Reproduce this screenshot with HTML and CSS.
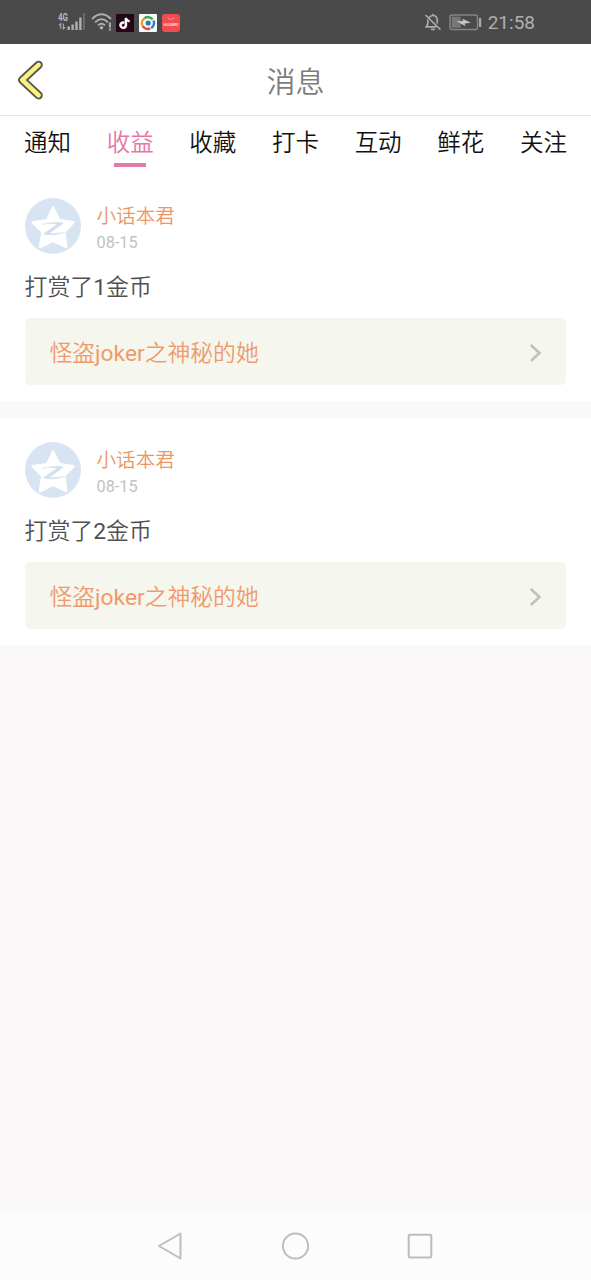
FILE: index.html
```html
<!DOCTYPE html>
<html lang="zh-CN">
<head>
<meta charset="utf-8">
<title>消息</title>
<link rel="stylesheet" href="styles.css">
</head>
<body>
<svg width="0" height="0" class="defs">
  <symbol id="star" viewBox="0 0 56 56">
    <circle cx="28" cy="28" r="28" fill="#d8e4f1"/>
    <path d="M28 8 L34.5 20.5 Q35 21.5 36 21.7 L49 23.6 Q50 24 49.2 25 L40.6 33.8 Q40 34.5 40.2 35.5 L42 49 Q42 50.4 40.6 49.8 L28 43.6 L15.5 49.8 Q14 50.4 14.2 49 L16.4 35.5 Q16.6 34.5 16 33.8 L7.2 25 Q6.4 24 7.4 23.6 L20.4 21.7 Q21.4 21.5 22 20.5 Z" fill="#fff" stroke="#fff" stroke-width="1" stroke-linejoin="round"/>
    <path d="M17.5 26.2Q27 23.6 37.8 24.6L37.8 25.8L24.4 35.2Q32 36 40 34.4Q30 38 19 36.6L19.2 35.2L32.4 26Q24 25 17.5 26.2Z" fill="#d2dfee" stroke="#d2dfee" stroke-width=".4"/>
  </symbol>
</svg>
<div class="screen">
  <div class="status">
    <div class="status-left">
      <svg class="signal" width="28" height="20" viewBox="0 0 28 20">
        <text x="0" y="8.7" class="net" textLength="10" lengthAdjust="spacingAndGlyphs">4G</text>
        <path d="M2.8 17V11.5L1 13.3M5.4 11.5V17L7.2 15.2" fill="none" stroke="#aaa" stroke-width="1.1"/>
        <path d="M9.5 14.5h2.4V18H9.5zM13.4 12.5h2.4V18h-2.4zM17.3 9.5h2.4V18h-2.4zM21.2 5.5h2.4V18h-2.4z" fill="#b0b0b0"/>
        <path d="M25 1h1.8v17H25z" fill="#6d6d6d"/>
      </svg>
      <svg class="wifi" width="22" height="20" viewBox="0 0 22 20">
        <g fill="none" stroke="#b0b0b0" stroke-width="1.9"><path d="M1 7Q10.5-2.5 20 7"/><path d="M4.1 10.3Q10.5 3.9 16.9 10.3"/><path d="M7 13.4Q10.5 10 14 13.4"/></g>
        <circle cx="10.5" cy="15.8" r="1.8" fill="#b0b0b0"/>
        <path d="M17.9 10.5h2v5h-2zM17.9 16.5h2v2h-2z" fill="#b0b0b0"/>
      </svg>
      <svg class="app" width="18" height="18" viewBox="0 0 18 18">
        <rect width="18" height="18" rx="1" fill="#220714"/>
        <g fill="none" stroke-width="2"><path d="M8 8.5A2.7 2.7 0 1 0 9.5 11.1V4Q10 6.5 13 7" stroke="#4ac9ce"/><path d="M8.9 9.1A2.7 2.7 0 1 0 10.4 11.7V4.6Q11 7 14 7.5" stroke="#e0416b"/><path d="M8.4 8.8A2.7 2.7 0 1 0 9.9 11.4V4Q10.5 6.8 13.5 7.3" stroke="#fff"/></g>
      </svg>
      <svg class="app" width="18" height="18" viewBox="0 0 18 18">
        <rect width="18" height="18" rx="1" fill="#fafafa"/>
        <g fill="none" stroke-width="2.5"><path d="M3.4 11.5A5.8 5.8 0 0 1 5.6 4.2" stroke="#eda12d"/><path d="M5.6 4.2A5.8 5.8 0 0 1 13.6 5.4" stroke="#37a85a"/><path d="M14.5 6.6A5.8 5.8 0 0 1 12 14" stroke="#397fc3"/><path d="M11 14.5A5.8 5.8 0 0 1 3.6 11.8" stroke="#d84d42"/></g>
        <circle cx="9.2" cy="9" r="2.6" fill="#287cad"/>
      </svg>
      <svg class="app" width="18" height="18" viewBox="0 0 18 18">
        <rect width="18" height="18" rx="3" fill="#f24b50"/>
        <path d="M5.8 3Q6.3 5.5 9 5.5T12.2 3" fill="none" stroke="#f9a0a0" stroke-width=".8"/>
        <text x="1.5" y="11.5" class="brand" textLength="15" lengthAdjust="spacingAndGlyphs">HUAWEI</text>
      </svg>
    </div>
    <div class="status-right">
      <svg width="18" height="18" viewBox="0 0 18 18" fill="none" stroke="#aaa" stroke-width="1.7">
        <path d="M5 4.7Q6.3 2.5 9 2.5Q13 2.5 13.2 7V10.6M3.8 6.4V11L2.2 13.8H12M9 .8V2.5M7.2 15.8Q9 17.2 10.8 15.8M1.4 2L16.4 16.7"/>
      </svg>
      <svg class="battery" width="33" height="17" viewBox="0 0 33 17">
        <rect x="1" y="1" width="27.5" height="14.5" rx="2" fill="none" stroke="#858585" stroke-width="1.5"/>
        <rect x="2.7" y="2.7" width="9" height="11" fill="#777"/>
        <path d="M7.5 7.3L14 7L13.4 4.7L22 8.8L15.8 9.4L16.2 12Z" fill="#c4c4c4"/>
        <rect x="30" y="4" width="2.2" height="9" rx=".6" fill="#a8a8a8"/>
      </svg>
      <span class="clock">21:58</span>
    </div>
  </div>
  <header class="header">
    <svg class="back" width="30" height="44" viewBox="0 0 30 44" fill="none" stroke-linecap="round" stroke-linejoin="round">
      <path d="M23.6 6.9L7.2 22L23.6 37.3" stroke="#55544c" stroke-width="8.4"/>
      <path d="M23.6 6.9L7.2 22L23.6 37.3" stroke="#fbf17f" stroke-width="4.6"/>
    </svg>
    <h1 class="title">消息</h1>
  </header>
  <nav class="tabs">
    <span class="tab">通知</span><span class="tab active">收益</span><span class="tab">收藏</span><span class="tab">打卡</span><span class="tab">互动</span><span class="tab">鲜花</span><span class="tab">关注</span>
  </nav>
  <main class="feed">
    <article class="card">
      <div class="user">
        <svg class="avatar"><use href="#star"/></svg>
        <div class="meta"><div class="name">小话本君</div><div class="date">08-15</div></div>
      </div>
      <p class="message">打赏了<span class="latin">1</span>金币</p>
      <div class="book"><span>怪盗<span class="latin">joker</span>之神秘的她</span>
        <svg width="14" height="20" viewBox="0 0 14 20"><path d="M1.8 2L10.5 10L1.8 18" fill="none" stroke="#c0c1bc" stroke-width="2.6"/></svg>
      </div>
    </article>
    <article class="card">
      <div class="user">
        <svg class="avatar"><use href="#star"/></svg>
        <div class="meta"><div class="name">小话本君</div><div class="date">08-15</div></div>
      </div>
      <p class="message">打赏了<span class="latin">2</span>金币</p>
      <div class="book"><span>怪盗<span class="latin">joker</span>之神秘的她</span>
        <svg width="14" height="20" viewBox="0 0 14 20"><path d="M1.8 2L10.5 10L1.8 18" fill="none" stroke="#c0c1bc" stroke-width="2.6"/></svg>
      </div>
    </article>
  </main>
  <footer class="navbar">
    <svg width="28" height="30" viewBox="0 0 28 30"><path d="M24.5 2.5V27.5L3 15Z"/></svg>
    <svg width="30" height="30" viewBox="0 0 30 30"><circle cx="15.5" cy="15" r="12.6"/></svg>
    <svg width="28" height="30" viewBox="0 0 28 30"><rect x="2.7" y="3.7" width="22.6" height="22.8" rx="1"/></svg>
  </footer>
</div>
</body>
</html>
```

FILE: styles.css
```css
* { box-sizing: border-box; }
body {
  margin: 0;
  background: #faf8f9;
  font-family: Roboto, "Noto Sans CJK SC DemiLight", "Noto Sans CJK SC", sans-serif;
  font-weight: 350;
}
svg { display: block; flex: none; }
.defs { position: absolute; }
.latin { font-weight: 400; }
.screen { display: flex; flex-direction: column; height: 1280px; }
.status {
  display: flex;
  justify-content: space-between;
  height: 44px;
  padding: 0 56px 0 58px;
  background: #4a4a4a;
}
.status-left, .status-right { display: flex; align-items: center; }
.wifi { margin: 0 3px 0 5px; }
.app { margin: 2px 5px 0 0; }
.net { font: 700 10px Roboto, sans-serif; fill: #b8b8b8; }
.brand { font: 700 4px Roboto, sans-serif; fill: #ffd8d8; }
.battery { margin: 1px 6px 0 7px; }
.clock { color: #b0b0b0; font-size: 19px; font-weight: 400; line-height: 44px; padding-top: 2px; }
.header {
  display: grid;
  grid-template-columns: 46px 1fr 46px;
  align-items: center;
  height: 72px;
  padding: 1px 0 0;
  background: #fff;
  border-bottom: 1px solid #e6e6e6;
}
.back { margin-left: 15px; }
.title { margin: 6px 0 0; text-align: center; font-size: 29px; line-height: 40px; font-weight: 350; color: #7c7c7c; }
.tabs {
  display: flex;
  justify-content: space-between;
  height: 58px;
  padding: 9px 24px 0 24px;
  background: #fff;
}
.tab { display: flex; flex-direction: column; align-items: center; font-size: 23.5px; line-height: 36px; color: #111; }
.active { color: #e776a8; }
.active::after { content: ""; width: 32px; height: 4px; margin-top: 2px; background: #e27baa; }
.feed { display: flex; flex-direction: column; gap: 17px; flex: 1; }
.card { height: 227px; padding: 24px 25px 0 24.5px; background: #fff; }
.user { display: flex; gap: 16px; height: 56px; }
.avatar { width: 56px; height: 56px; }
.meta { padding-top: 5px; }
.name { font-size: 19.6px; line-height: 27px; color: #ee9565; }
.date { font-size: 16.3px; line-height: 25px; color: #c2c2c2; font-weight: 400; }
.message { margin: 17px 0 13px; font-size: 22.9px; line-height: 34px; color: #505050; }
.book {
  display: flex;
  justify-content: space-between;
  align-items: center;
  height: 67px;
  padding: 0 23px 0 25px;
  border-radius: 5px;
  background: #f5f6ee;
  color: #f09a6c;
  font-size: 22.8px;
}
.book svg { margin-top: 2px; }
.navbar {
  display: flex;
  align-items: center;
  justify-content: center;
  gap: 96px;
  height: 68px;
  padding-right: 2px;
  background: #fcfcfc;
  fill: none;
  stroke: #bdbdbd;
  stroke-width: 2;
  stroke-linejoin: round;
}
```
